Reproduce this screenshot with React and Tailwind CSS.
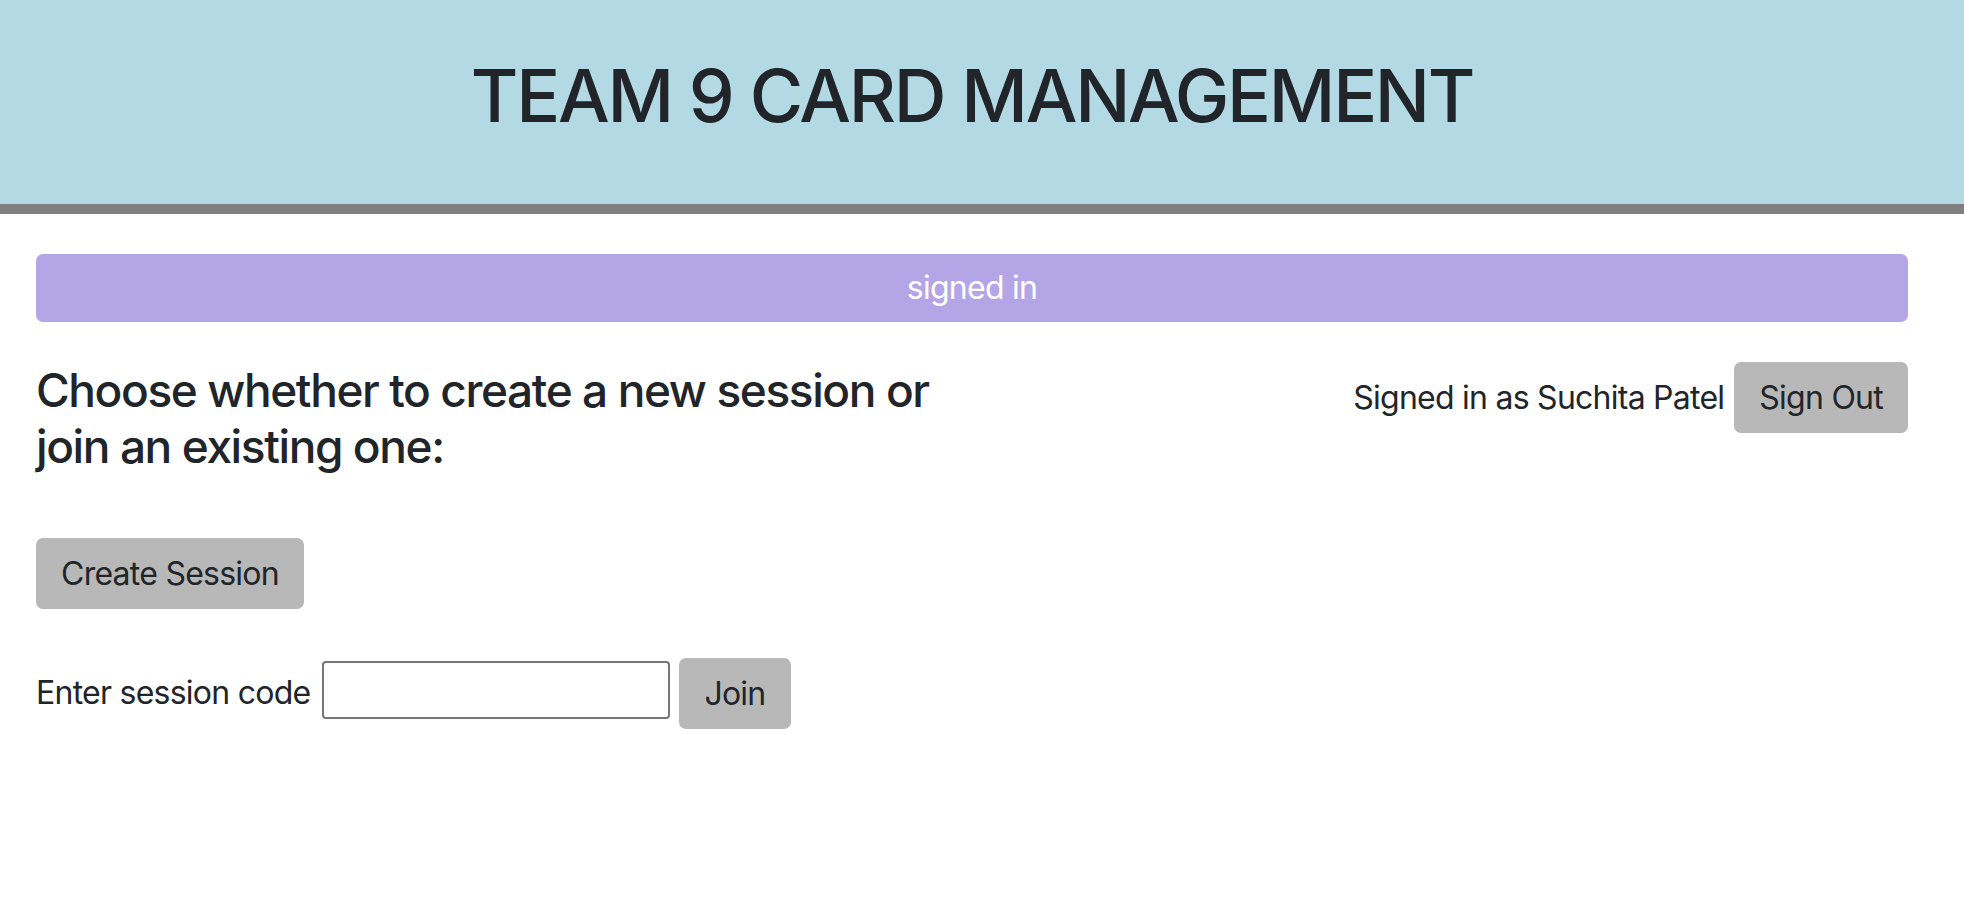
import React from 'react'

const btn =
  'h-[71px] px-[25px] rounded-[7px] bg-[#b8b8b8] text-[32px] leading-[48px] text-[#212529] flex items-center'

const App = () => {
  return (
    <div className="min-h-screen bg-white font-['Inter','Noto_Sans',sans-serif] text-[#212529] tracking-[-0.75px]">
      {/* Header */}
      <header className="h-[214px] bg-[#b3d9e4] border-b-[10px] border-[#808080] pl-[36px] pr-[56px] pb-[13px] flex items-center justify-center">
        <h1 className="text-[73px] font-medium leading-[88px] tracking-[-2.3px]">TEAM 9 CARD MANAGEMENT</h1>
      </header>

      <main className="pl-[36px] pr-[56px] pt-[40px]">
        {/* Status */}
        <div className="h-[68px] rounded-[7px] bg-[#b4a6e6] flex items-center justify-center text-white text-[32px]">
          signed in
        </div>

        <div className="mt-[40px] flex justify-between items-start">
          <h4 className="w-1/2 text-[46px] leading-[56px] font-medium tracking-[-1.4px]">
            Choose whether to create a new session or join an existing one:
          </h4>
          <div className="flex items-center gap-[10px]">
            <span className="text-[32px] leading-[48px]">Signed in as Suchita Patel</span>
            <button className={btn}>Sign Out</button>
          </div>
        </div>

        <button className={`${btn} mt-[64px]`}>Create Session</button>

        <div className="mt-[49px] flex items-start">
          <label className="mt-[11px] text-[32px] leading-[48px]">Enter session code</label>
          <input
            type="text"
            className="ml-[12px] mt-[3px] w-[348px] h-[58px] border-2 border-[#767676] rounded-[4px] px-2 text-[32px]"
          />
          <button className={`${btn} ml-[9px]`}>Join</button>
        </div>
      </main>
    </div>
  )
}

export default App
